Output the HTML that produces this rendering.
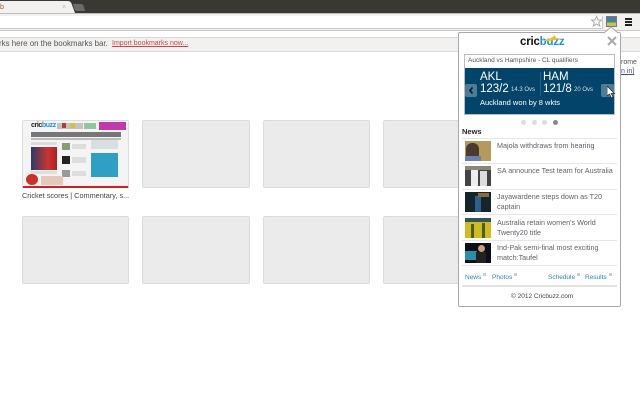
<!DOCTYPE html>
<html><head><meta charset="utf-8"><style>
*{box-sizing:border-box}
html,body{margin:0;padding:0;background:#fff;width:640px;height:400px;overflow:hidden;font-family:"Liberation Sans",sans-serif}
.a{position:absolute}
.t{position:absolute;white-space:nowrap;font-size:7.2px;color:#5f5f68}
.card{position:absolute;width:108px;height:68px;background:#ebebeb;border:1px solid #dcdcdc;border-radius:2px}
.th{position:absolute;left:465px;width:26px;height:20px;overflow:hidden}
.sep{position:absolute;left:462px;width:155px;height:1px;background:#e6e6e6}
.dot{position:absolute;top:120px;width:5px;height:5px;border-radius:50%;background:#ddd}
.lk{position:absolute;top:274px;font-size:6.5px;color:#2f7fc0;white-space:nowrap}
.lk i{position:absolute;top:-1px;right:-5px;width:3px;height:3px;background:#ccc}
</style></head><body>
<div class="a" style="left:0;top:0;width:640px;height:13px;background:#3a3833"></div>
<svg class="a" style="left:0;top:0" width="90" height="14"><path d="M0 1H68Q71 1 72 5L75 13H0Z" fill="#f2f1f0"/><path d="M73 4H81Q83 4 84 7L85 11H77Q75 11 74 8Z" fill="#6b6b6b"/></svg>
<div class="t" style="left:0;top:2px;color:#a06030">b</div>
<div class="t" style="left:62px;top:2px;color:#bbb">×</div>
<div class="a" style="left:0;top:13px;width:640px;height:24px;background:#f2f1f0;border-top:1px solid #bdbdbd"></div>
<div class="a" style="left:0;top:16px;width:603px;height:13px;background:#fff;border-bottom:1px solid #c8c8c8;border-right:1px solid #c8c8c8"></div>
<div class="a" style="left:0;top:30px;width:640px;height:7px;background:#fff;border-top:1px solid #c8c8c8"></div>
<div class="a" style="left:0;top:37px;width:640px;height:15px;background:#f2f1f0;border-top:1px solid #d8d8d8;border-bottom:1px solid #dcdcdc"></div>
<div class="t" style="left:-1px;top:39px;font-size:7.9px;color:#555">rks here on the bookmarks bar.</div>
<div class="t" style="left:112px;top:40px;font-size:7px;color:#d0453f;text-decoration:underline">Import bookmarks now...</div>
<svg class="a" style="left:590px;top:15px" width="13" height="13"><path d="M6.5 1.5L8 5H11.5L8.8 7.4L9.8 11L6.5 9L3.2 11L4.2 7.4L1.5 5H5Z" fill="#fff" stroke="#aaa"/></svg>
<div class="a" style="left:606px;top:16px;width:11px;height:11px;background:linear-gradient(#4a7f96 0 60%,#c5c74c 60%);border:1px solid #778"></div>
<div class="a" style="left:625px;top:18px;width:7px;height:2px;background:#222;box-shadow:0 3px #222,0 6px #222"></div>

<div class="card" style="left:22px;top:120px;width:107px;background:#f4f4f4;border-color:#ddd;border-bottom:2px solid #c22"></div>
<div class="t" style="left:31px;top:122px;font-size:7px;font-weight:bold;color:#222;letter-spacing:-.4px">cric<span style="color:#2a8fd8">buzz</span></div>
<div class="a" style="left:57px;top:123px;width:26px;height:6px;background:linear-gradient(90deg,#b9c4c9,#c9c4b9)"></div>
<div class="a" style="left:62px;top:123px;width:4px;height:5px;background:#c0392b"></div>
<div class="a" style="left:70px;top:123px;width:5px;height:5px;background:#d8c040"></div>
<div class="a" style="left:84px;top:123px;width:12px;height:6px;background:#8fc89a"></div>
<div class="a" style="left:99px;top:122px;width:27px;height:8px;background:#c03aa8"></div>
<div class="a" style="left:31px;top:132px;width:90px;height:5px;background:#777"></div>
<div class="a" style="left:31px;top:138px;width:90px;height:2px;background:#bbb"></div>
<div class="a" style="left:31px;top:142px;width:26px;height:3px;background:#ddd"></div>
<div class="a" style="left:31px;top:147px;width:26px;height:23px;background:linear-gradient(90deg,#2a3b66,#c33 65%,#a22)"></div>
<div class="a" style="left:31px;top:171px;width:26px;height:3px;background:#ddd"></div>
<div class="a" style="left:62px;top:143px;width:8px;height:7px;background:#8a9a7a"></div>
<div class="a" style="left:72px;top:144px;width:14px;height:5px;background:#ddd"></div>
<div class="a" style="left:62px;top:156px;width:8px;height:8px;background:#222"></div>
<div class="a" style="left:72px;top:157px;width:14px;height:6px;background:#ddd"></div>
<div class="a" style="left:62px;top:170px;width:8px;height:7px;background:#999"></div>
<div class="a" style="left:72px;top:171px;width:14px;height:5px;background:#ddd"></div>
<div class="a" style="left:91px;top:153px;width:27px;height:24px;background:#2f9fc4"></div>
<div class="a" style="left:91px;top:140px;width:27px;height:9px;background:#d8dee2"></div>
<div class="a" style="left:26px;top:174px;width:12px;height:11px;background:#c9302c;border-radius:50%"></div>
<div class="a" style="left:41px;top:176px;width:22px;height:9px;background:#e4c8b8"></div>
<div class="t" style="left:22px;top:191px;font-size:7.3px;color:#444">Cricket scores | Commentary, s...</div>
<div class="card" style="left:142px;top:120px"></div>
<div class="card" style="left:263px;top:120px;width:107px"></div>
<div class="card" style="left:383px;top:120px"></div>
<div class="card" style="left:22px;top:216px;width:107px"></div>
<div class="card" style="left:142px;top:216px"></div>
<div class="card" style="left:263px;top:216px;width:107px"></div>
<div class="card" style="left:383px;top:216px"></div>
<div class="t" style="left:621px;top:59px;font-size:7px;color:#555">rome</div>
<div class="t" style="left:621px;top:68px;font-size:7px;color:#4a4a88;text-decoration:underline">n in]</div>

<div class="a" style="left:458px;top:32px;width:163px;height:275px;background:#fff;border:1px solid #a8a8a8;border-radius:2px"></div>
<svg class="a" style="left:603px;top:26px" width="20" height="8"><path d="M1 7L8 1L15 7" fill="#fff" stroke="#a8a8a8"/></svg>
<div class="t" style="left:520px;top:36px;font-size:11.5px;font-weight:bold;color:#111;letter-spacing:-.2px">cric<span style="color:#1e8fe0">buzz</span></div>
<svg class="a" style="left:540px;top:34px" width="26" height="8"><path d="M0 7Q12 5 15 1L16 4L25 5Q15 5 10 7Z" fill="#f0c020"/></svg>
<svg class="a" style="left:607px;top:36px" width="10" height="10"><path d="M1 1L9 9M9 1L1 9" stroke="#aaa" stroke-width="2"/></svg>

<div class="a" style="left:464px;top:54px;width:151px;height:61px;border:1px solid #b8bcc4;background:#fff"></div>
<div class="t" style="left:468px;top:57px;font-size:6.5px;color:#555">Auckland vs Hampshire - CL qualifiers</div>
<div class="a" style="left:465px;top:68px;width:149px;height:46px;background:#03446b"></div>
<div class="a" style="left:465px;top:84px;width:12px;height:13px;background:#4d7c97;border-radius:2px"></div>
<div class="a" style="left:601px;top:84px;width:13px;height:13px;background:#4d7c97;border-radius:2px"></div>
<svg class="a" style="left:465px;top:84px" width="12" height="13"><path d="M7.5 3.5L5 6.5L7.5 9.5" fill="none" stroke="#012" stroke-width="1.6"/></svg>
<svg class="a" style="left:607px;top:86px" width="9" height="13"><path d="M0 0V10L2.5 8L4.5 12L6 11L4.2 7.5H7.5Z" fill="#fff" stroke="#222" stroke-width=".7"/></svg>
<div class="a" style="left:540px;top:72px;width:1px;height:24px;background:#2a5f80"></div>
<div class="t" style="left:480px;top:71px;font-size:11.5px;color:#fff">AKL</div>
<div class="t" style="left:480px;top:83px;font-size:11.5px;color:#fff">123/2</div>
<div class="t" style="left:511px;top:87px;font-size:6px;color:#ddd">14.3 Ovs</div>
<div class="t" style="left:543px;top:71px;font-size:11.5px;color:#fff">HAM</div>
<div class="t" style="left:543px;top:83px;font-size:11.5px;color:#fff">121/8</div>
<div class="t" style="left:574px;top:87px;font-size:6px;color:#ddd">20 Ovs</div>
<div class="t" style="left:480px;top:98px;font-size:7.5px;color:#fff">Auckland won by 8 wkts</div>
<div class="dot" style="left:521px"></div><div class="dot" style="left:532px"></div><div class="dot" style="left:542px"></div><div class="dot" style="left:553px;background:#888"></div>
<div class="t" style="left:462px;top:127px;font-size:7.5px;font-weight:bold;color:#223">News</div>

<div class="sep" style="top:138px"></div>
<div class="th" style="top:141px;background:#b59a5e"><div class="a" style="left:1px;top:2px;width:13px;height:18px;background:#4a3a30;border-radius:6px 6px 0 0"></div><div class="a" style="left:0;top:15px;width:16px;height:5px;background:#6a80b0"></div></div>
<div class="t" style="left:497px;top:141px">Majola withdraws from hearing</div>
<div class="sep" style="top:163px"></div>
<div class="th" style="top:166px;background:#444"><div class="a" style="left:6px;top:3px;width:7px;height:17px;background:#eee"></div><div class="a" style="left:15px;top:5px;width:7px;height:15px;background:#ddd"></div><div class="a" style="left:0;top:0;width:26px;height:4px;background:#887"></div></div>
<div class="t" style="left:497px;top:166px">SA announce Test team for Australia</div>
<div class="sep" style="top:189px"></div>
<div class="th" style="top:192px;background:#16252c"><div class="a" style="left:10px;top:4px;width:6px;height:16px;background:#2c5f8a"></div><div class="a" style="left:13px;top:1px;width:11px;height:4px;background:#8a6a3a"></div></div>
<div class="t" style="left:497px;top:192px">Jayawardene steps down as T20</div>
<div class="t" style="left:497px;top:202px">captain</div>
<div class="sep" style="top:214px"></div>
<div class="th" style="top:218px;background:#d0bc22"><div class="a" style="left:0;top:0;width:26px;height:4px;background:#355"></div><div class="a" style="left:6px;top:6px;width:3px;height:14px;background:#486018"></div><div class="a" style="left:17px;top:5px;width:3px;height:15px;background:#486018"></div></div>
<div class="t" style="left:497px;top:218px">Australia retain women's World</div>
<div class="t" style="left:497px;top:228px">Twenty20 title</div>
<div class="sep" style="top:240px"></div>
<div class="th" style="top:243px;background:#0c0f18"><div class="a" style="left:0;top:8px;width:12px;height:9px;background:#2a90a8"></div><div class="a" style="left:13px;top:2px;width:7px;height:7px;background:#c9a080;border-radius:50%"></div><div class="a" style="left:11px;top:9px;width:10px;height:11px;background:#222"></div></div>
<div class="t" style="left:497px;top:243px">Ind-Pak semi-final most exciting</div>
<div class="t" style="left:497px;top:253px">match:Taufel</div>
<div class="sep" style="top:265px"></div>
<div class="lk" style="left:465px">News<i></i></div>
<div class="lk" style="left:492px">Photos<i></i></div>
<div class="lk" style="left:548px">Schedule<i></i></div>
<div class="lk" style="left:585px">Results<i></i></div>
<div class="a" style="left:462px;top:285px;width:155px;height:2px;background:#e2e2e2"></div>
<div class="t" style="left:511px;top:293px;font-size:6.5px;color:#444">© 2012 Cricbuzz.com</div>
</body></html>
